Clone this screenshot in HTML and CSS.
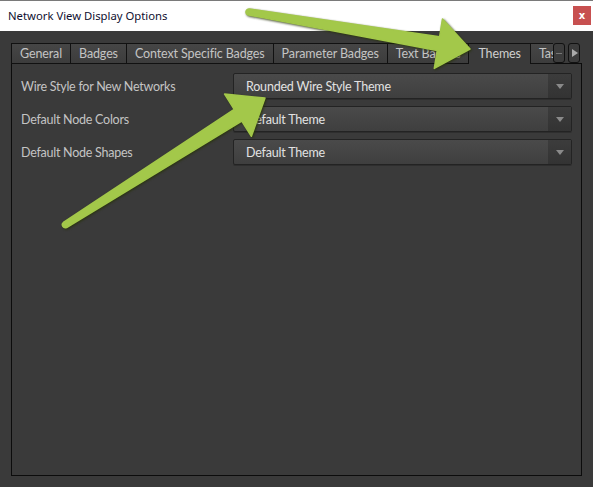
FILE: index.html
```html
<!DOCTYPE html>
<html>
<head>
<meta charset="utf-8">
<link rel="stylesheet" href="styles.css">
</head>
<body>
<div class="window">
  <div class="titlebar">
    <span class="title">Network View Display Options</span>
    <span class="close">x</span>
  </div>
  <div class="content">
    <div class="tabbar">
      <div class="tabs">
        <div class="tab">General</div>
        <div class="tab">Badges</div>
        <div class="tab">Context Specific Badges</div>
        <div class="tab">Parameter Badges</div>
        <div class="tab">Text Badges</div>
        <div class="tab active">Themes</div>
        <div class="tab">Tasks</div>
      </div>
      <div class="scroll prev"><span class="dash"></span></div>
      <div class="scroll next"><span class="tri"></span></div>
    </div>
    <div class="panel">
      <div class="form">
        <div class="label">Wire Style for New Networks</div>
        <div class="select"><span class="value">Rounded Wire Style Theme</span><span class="drop"><span class="caret"></span></span></div>
        <div class="label">Default Node Colors</div>
        <div class="select"><span class="value">Default Theme</span><span class="drop"><span class="caret"></span></span></div>
        <div class="label">Default Node Shapes</div>
        <div class="select"><span class="value">Default Theme</span><span class="drop"><span class="caret"></span></span></div>
      </div>
    </div>
  </div>
  <svg class="arrows" width="593" height="487" viewBox="0 0 593 487">
    <path class="arrow" d="M 249.5,9 L 439.6,36.8 L 442.5,19 L 470,49 L 434.3,68.4 L 437.2,50.6 L 248.5,15 A 3,3 0 0 1 249.5,9 Z"/>
    <path class="arrow" d="M 63.4,222.5 L 234.2,109.3 L 224.6,94.1 L 265,98 L 251.4,136.3 L 241.8,121.1 L 66.6,227.5 A 3,3 0 0 1 63.4,222.5 Z"/>
  </svg>
</div>
</body>
</html>
```
FILE: styles.css
```css
html, body {
  margin: 0;
  padding: 0;
  background: #3a3a3a;
}
.window {
  position: relative;
  width: 593px;
  height: 487px;
  background: #3a3a3a;
  overflow: hidden;
  font-family: Lato, "Open Sans", sans-serif;
}
.titlebar {
  height: 30px;
  background: #ffffff;
  border-top: 1px solid #7a7a7a;
  display: flex;
  align-items: center;
  justify-content: space-between;
  padding-left: 8px;
  padding-right: 2px;
}
.title {
  font-family: "Noto Sans", sans-serif;
  font-size: 11.3px;
  color: #101030;
  margin-top: -1px;
}
.close {
  width: 18px;
  height: 19px;
  background: #c75050;
  color: #ffffff;
  font-family: "DejaVu Sans", sans-serif;
  font-weight: bold;
  font-size: 10px;
  display: flex;
  align-items: center;
  justify-content: center;
  margin-top: -1px;
}
.content {
  padding: 12px 11px 0 11px;
}
.tabbar {
  display: flex;
  height: 21px;
  position: relative;
  z-index: 1;
}
.tabs {
  display: flex;
  flex: 1;
  overflow: hidden;
  min-width: 0;
}
.tab {
  flex: none;
  height: 19px;
  padding: 0 8px;
  border: 1px solid #111111;
  border-right: none;
  background: linear-gradient(#464646, #3c3c3c);
  color: #c4c4c4;
  font-size: 12.5px;
  letter-spacing: -0.12px;
  line-height: 19px;
  white-space: nowrap;
}
.tab.active {
  background: #3a3a3a;
  height: 20px;
  border-bottom: none;
  color: #cfcfcf;
  padding: 0 9px;
}
.scroll {
  flex: none;
  width: 10px;
  height: 18px;
  border: 1px solid #111111;
  border-radius: 3px;
  background: #3c3c3c;
  display: flex;
  align-items: center;
  justify-content: center;
}
.scroll.next {
  margin-left: 3px;
  margin-right: 2px;
}
.dash {
  width: 6px;
  height: 1px;
  background: #777777;
}
.tri {
  width: 0;
  height: 0;
  border-top: 4px solid transparent;
  border-bottom: 4px solid transparent;
  border-left: 6px solid #aaaaaa;
  margin-left: 1px;
}
.panel {
  height: 393px;
  border: 1px solid #0c0c0c;
  margin-top: -1px;
  padding: 9px 9px;
}
.form {
  display: grid;
  grid-template-columns: 212px 1fr;
  row-gap: 7px;
  align-items: center;
}
.label {
  color: #c4c4c4;
  font-size: 12.5px;
  letter-spacing: -0.25px;
}
.select {
  height: 24px;
  border: 1px solid #232323;
  border-radius: 2px;
  background: linear-gradient(#4a4a4a, #3f3f3f);
  display: flex;
  align-items: center;
  box-shadow: 0 1px 0 #2e2e2e;
}
.value {
  flex: 1;
  padding-left: 12px;
  color: #e2e2e2;
  font-size: 12.5px;
  letter-spacing: -0.2px;
}
.drop {
  width: 23px;
  height: 24px;
  background: linear-gradient(#3c3c3c, #333333);
  display: flex;
  align-items: center;
  justify-content: center;
}
.caret {
  width: 0;
  height: 0;
  border-left: 4px solid transparent;
  border-right: 4px solid transparent;
  border-top: 5px solid #8a8a8a;
}
.arrows {
  position: absolute;
  top: 0;
  left: 0;
  z-index: 5;
  pointer-events: none;
}
.arrow {
  fill: #a3c84a;
  stroke: #a3c84a;
  stroke-width: 1.5;
  stroke-linejoin: round;
  filter: drop-shadow(1px 1.5px 1px rgba(40, 50, 10, 0.85));
}
```
